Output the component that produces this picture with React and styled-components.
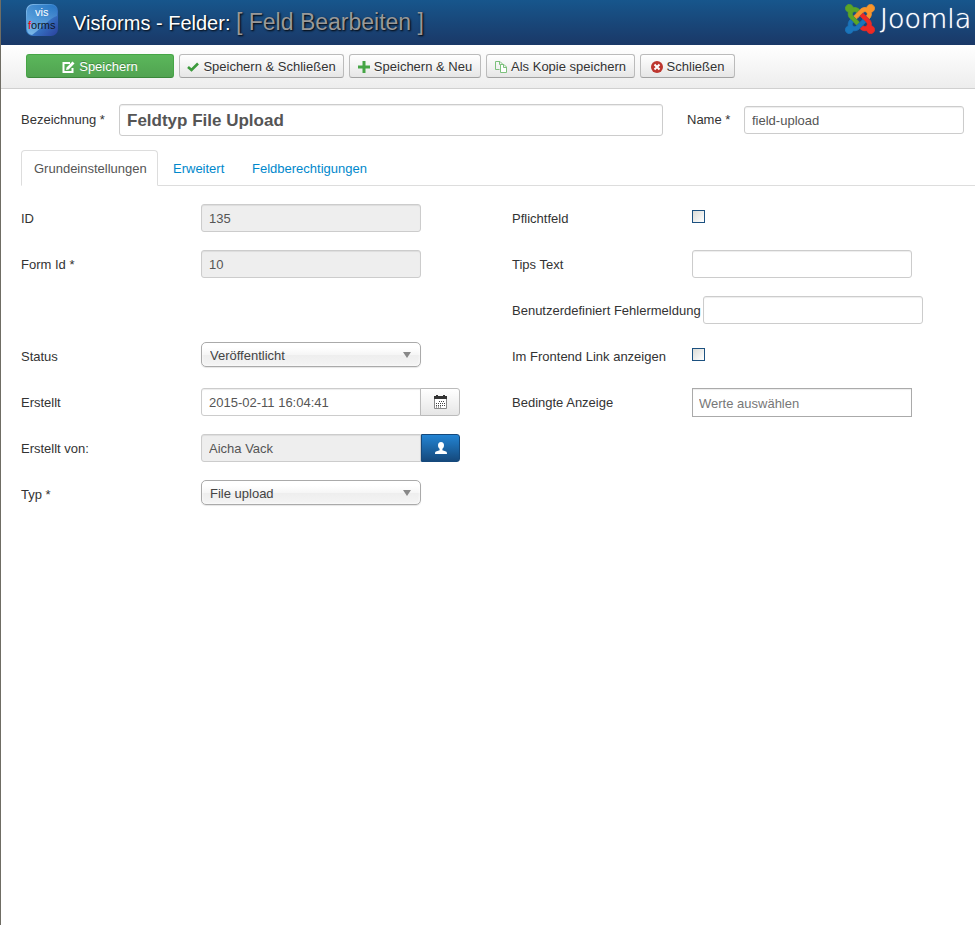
import React, { useState } from 'react';
import styled, { createGlobalStyle, css } from 'styled-components';

const GlobalStyle = createGlobalStyle`
  * {
    box-sizing: border-box;
  }

  body {
    margin: 0;
    background: #fff;
    color: #333;
    font-family: "Liberation Sans", Arial, sans-serif;
    font-size: 13px;
    line-height: 18px;
  }

  button, input, select {
    font-family: inherit;
    font-size: inherit;
    line-height: inherit;
  }
`;

//LAYOUT

const Page = styled.div`
  min-height: 100vh;
  border-left: 1px solid #6f6d64;
  overflow: hidden;
`;

const Header = styled.header`
  display: flex;
  align-items: flex-start;
  height: 45px;
  padding: 4px 0 0 25px;
  overflow: hidden;
  background: linear-gradient(#17568c, #1a3867);
`;

const Title = styled.h1`
  flex: 1;
  margin: 0 0 0 15px;
  color: #fff;
  font-size: 20px;
  font-weight: normal;
  line-height: 36px;
  white-space: nowrap;
  text-shadow: 1px 1px 2px #000;
`;

const Subtitle = styled.small`
  color: #999;
  font-size: 23px;
`;

const Brand = styled.a`
  display: flex;
  flex: none;
  align-items: center;
  gap: 5px;
  width: 130px;
  height: 30px;
  color: #fff;
  font-family: "DejaVu Sans", sans-serif;
  font-size: 27px;
  font-weight: 200;
  text-decoration: none;
  text-shadow: 0 0 1px #fff;
  white-space: nowrap;

  svg {
    flex: none;
  }
`;

const Toolbar = styled.div`
  display: flex;
  flex-wrap: wrap;
  gap: 5px;
  padding: 9px 25px 10px;
  border-bottom: 1px solid #d0d0d0;
  background: linear-gradient(#fff, #ededed);
`;

const ToolButton = styled.button`
  display: inline-flex;
  align-items: center;
  justify-content: center;
  gap: 4px;
  height: 24px;
  min-width: ${(props) => props.$width}px;
  padding: 1px 6px 0;
  border: 1px solid #bbb;
  border-bottom-color: #a2a2a2;
  border-radius: 3px;
  background: linear-gradient(#fff, #e6e6e6);
  color: #333;
  white-space: nowrap;
  text-shadow: 0 1px 1px rgba(255, 255, 255, .75);
  cursor: pointer;

  ${(props) => props.$primary && css`
    border-color: #46a546 #46a546 #3a873a;
    background: linear-gradient(#5bb75b, #51a351);
    color: #fff;
    text-shadow: 0 -1px 0 rgba(0, 0, 0, .25);
  `}
`;

const Content = styled.form`
  padding: 15px 0 0 20px;
`;

const TitleRow = styled.div`
  display: flex;
  align-items: center;
  padding-right: 11px;
`;

const TitleLabel = styled.label`
  flex: none;
  width: ${(props) => props.$width}px;
`;

const Tabs = styled.nav`
  display: flex;
  gap: 2px;
  margin: 14px 0 18px;
  border-bottom: 1px solid #ddd;
`;

const Tab = styled.a`
  min-width: ${(props) => props.$width}px;
  height: 36px;
  margin-bottom: -1px;
  padding: 9px 10px 0 12px;
  border: 1px solid transparent;
  border-radius: 4px 4px 0 0;
  color: #08c;
  text-decoration: none;

  ${(props) => props.$active && css`
    border-color: #ddd #ddd #fff;
    background: #fff;
    color: #555;
  `}
`;

const Columns = styled.div`
  display: grid;
  grid-template-columns: 1fr 1fr;
  column-gap: 28px;
`;

const Row = styled.div`
  display: flex;
  align-items: flex-start;
  height: 28px;
  margin-bottom: 18px;
`;

const Label = styled.label`
  flex: none;
  min-width: 180px;
  padding: 6px 2px 0 0;
`;

//CONTROLS

const TextInput = styled.input`
  width: 220px;
  height: 28px;
  padding: 4px 7px;
  border: 1px solid #ccc;
  border-radius: 3px;
  background: #fff;
  box-shadow: inset 0 1px 1px rgba(0, 0, 0, .075);
  color: #555;

  &:read-only {
    background: #eee;
  }
`;

const AddonInput = styled(TextInput)`
  border-radius: 3px 0 0 3px;
`;

const TitleInput = styled(TextInput)`
  flex: 1;
  min-width: 0;
  height: 32px;
  margin-right: 24px;
  padding-top: 6px;
  font-size: 17px;
  font-weight: bold;
`;

const ChosenInput = styled(TextInput)`
  height: 29px;
  padding: 5px 6px 3px;
  border-color: #aaa;
  border-radius: 0;

  &::placeholder {
    color: #777;
    opacity: 1;
  }
`;

const SelectWrap = styled.span`
  position: relative;
  width: 220px;

  svg {
    position: absolute;
    top: 10px;
    right: 10px;
    pointer-events: none;
  }
`;

const Select = styled.select`
  width: 100%;
  height: 25px;
  padding: 2px 24px 0 8px;
  border: 1px solid #aaa;
  border-radius: 5px;
  background: linear-gradient(#fff 20%, #f6f6f6 50%, #eee 52%, #f4f4f4 100%);
  box-shadow: 0 0 3px #fff inset, 0 1px 1px rgba(0, 0, 0, .1);
  color: #444;
  appearance: none;
`;

const Checkbox = styled.input`
  width: 13px;
  height: 13px;
  margin: 6px 0 0;
  border: 1px solid #1c5180;
  background: linear-gradient(135deg, #dcdcd7, #fff);
  appearance: none;

  &:checked {
    background: #1c5180;
  }
`;

const AddonButton = styled.button`
  display: flex;
  align-items: center;
  justify-content: center;
  width: 40px;
  height: 28px;
  margin-left: -1px;
  padding: 0;
  border: 1px solid #bbb;
  border-radius: 0 3px 3px 0;
  background: linear-gradient(#fff, #e6e6e6);
  color: #333;
  cursor: pointer;

  ${(props) => props.$primary && css`
    width: 39px;
    margin-left: 0;
    border-color: #15497c;
    background: linear-gradient(#2384d3, #15497c);
    color: #fff;
  `}
`;

//ICONS

const VisformsLogo = () => (
  <svg width="32" height="32" viewBox="0 0 32 32" role="img" aria-label="Visforms">
    <defs>
      <linearGradient id="vis" x1="0" y1="0" x2="1" y2="1">
        <stop offset="0" stopColor="#8fc4ee" />
        <stop offset=".45" stopColor="#3a86d0" />
        <stop offset="1" stopColor="#2a3f9c" />
      </linearGradient>
      <linearGradient id="shine" x1="0" y1="0" x2="0" y2="1">
        <stop offset="0" stopColor="#1d70c0" stopOpacity=".6" />
        <stop offset="1" stopColor="#9ad4f8" stopOpacity=".7" />
      </linearGradient>
    </defs>
    <rect width="32" height="32" rx="7" fill="url(#vis)" />
    <path d="M7 1h18a6 6 0 0 1 6 6v5C24 14 18 22 6 31a6 6 0 0 1-5-6V7a6 6 0 0 1 6-6z" fill="url(#shine)" />
    <text x="9" y="12" fontSize="11" fill="#fff">vis</text>
    <text x="2" y="25" fontSize="11" fill="#101828"><tspan fill="#f00">f</tspan>orms</text>
  </svg>
);

const JoomlaMark = () => (
  <svg width="30" height="30" viewBox="-6 26 460 460" strokeWidth="12" aria-hidden="true">
    <path fill="#5ba526" stroke="#5ba526" d="M.6 92.1C.6 58.8 27.4 32 60.4 32c30 0 54.500 21.900 59.200 50.200 32.600-7.600 67.100.6 96.500 30l-44.300 44.300c-20.500-20.500-42.600-16.300-55.400-3.500-14.300 14.300-14.300 37.900 0 52.200l99.500 99.500-44 44.300c-87.700-87.200-49.700-49.700-99.800-99.700-26.800-26.500-35-64.800-24.800-98.900C20.400 144.600.6 120.700.6 92.100z" />
    <path fill="#f9952b" stroke="#f9952b" d="M130.100 208.500l44.300 44.300c10-10 89.700-89.700 99.700-99.800 14.300-14.300 37.600-14.300 51.900 0 12.800 12.800 17 35-3.500 55.400l44 44.300c31.200-31.200 38.500-67.600 28.900-101.200 29.200-4.100 51.900-29.200 51.900-59.500 0-33.200-26.800-60.100-59.800-60.100-30.300 0-55.400 22.500-59.500 51.600-33.800-9.900-71.700-1.500-98.300 25.100-18.300 19.100-71.100 71.500-99.600 99.900z" />
    <path fill="#ee2a24" stroke="#ee2a24" d="M396.400 360.700c8.200-32.700-.9-68.500-26.300-93.900-11.800-12.200 5 4.700-99.500-99.700l-44.300 44.300 99.700 99.700c14.300 14.300 14.300 37.600 0 51.900-12.800 12.800-35 17-55.400-3.500l-44 44.300c27.600 30.200 68 38.800 102.700 28 5.500 27.400 29.700 48.100 58.900 48.100 33 0 59.800-26.800 59.800-60.100 0-30.200-22.500-55-51.600-59.100z" />
    <path fill="#1b75bb" stroke="#1b75bb" d="M312.100 307.600l-44-44.300c-87 86.400-50.400 50.400-99.700 99.800-14.300 14.300-37.600 14.300-51.900 0-13.100-13.400-16.900-35.300 3.200-55.400l-44-44.300c-30.200 30.200-38 65.200-29.500 98.300-26.700 6-46.200 29.900-46.200 58.200C0 453.200 26.800 480 59.800 480c28.600 0 52.500-19.800 58.600-46.700 32.700 8.200 68.500-.6 94.200-26 32.100-32 12.200-12.400 99.500-99.700z" />
  </svg>
);

const EditIcon = () => (
  <svg width="13" height="12" viewBox="0 0 13 12" fill="none" aria-hidden="true">
    <path d="M8 2H1.5v9h9V7" stroke="#fff" strokeWidth="2" />
    <path d="M4 9l.6-2.6L10.5.6l2 2L6.6 8.4z" fill="#fff" />
  </svg>
);

const CheckIcon = () => (
  <svg width="12" height="10" viewBox="0 0 12 10" fill="none" aria-hidden="true">
    <path d="M1 5l3.5 3L11 1.5" stroke="#3c9a3c" strokeWidth="2.6" />
  </svg>
);

const PlusIcon = () => (
  <svg width="12" height="12" viewBox="0 0 12 12" aria-hidden="true">
    <path d="M4.500 0h3v4.500H12v3H7.500V12h-3V7.500H0v-3h4.500z" fill="#46a546" />
  </svg>
);

const CopyIcon = () => (
  <svg width="12" height="12" viewBox="0 0 12 12" fill="none" stroke="#7cc07c" aria-hidden="true">
    <path d="M4.500 8.500h-4v-8H5L7.500 3M4.500.5v3h2" />
    <path d="M5.500 3.500H9L11.500 6v5.500h-6zM8.500 3.500v3h3" fill="#fff" />
  </svg>
);

const CancelIcon = () => (
  <svg width="12" height="12" viewBox="0 0 12 12" fill="none" aria-hidden="true">
    <circle cx="6" cy="6" r="6" fill="#bd362f" />
    <path d="M3.500 3.500l5 5M8.500 3.500l-5 5" stroke="#fff" strokeWidth="2" />
  </svg>
);

const CalendarIcon = () => (
  <svg width="13" height="14" viewBox="0 0 13 14" aria-hidden="true">
    <path d="M.5 4v9.500h12V4" fill="#fff" stroke="#888" />
    <path d="M0 1h2V0h2v1h5V0h2v1h2v3H0z" fill="#333" />
    <path d="M5 6.500h6M2 8.500h9M2 10.500h9M2 12h5" stroke="#444" strokeDasharray="1 1" />
  </svg>
);

const UserIcon = () => (
  <svg width="12" height="12" viewBox="0 0 12 12" fill="currentColor" aria-hidden="true">
    <path d="M6 0c2 0 3 1.300 3 3.200C9 5 8.200 6 7.400 6.700v1.500L11 9.600c.7.300 1 .8 1 2.400H0c0-1.600.3-2.100 1-2.400l3.600-1.400V6.700C3.800 6 3 5 3 3.200 3 1.300 4 0 6 0z" />
  </svg>
);

const Arrow = () => (
  <svg width="8" height="6" viewBox="0 0 8 6" aria-hidden="true">
    <path d="M0 0h8L4 6z" fill="#888" />
  </svg>
);

const BUTTONS = [
  { text: 'Speichern', icon: <EditIcon />, width: 148, primary: true },
  { text: 'Speichern & Schließen', icon: <CheckIcon />, width: 165 },
  { text: 'Speichern & Neu', icon: <PlusIcon />, width: 132 },
  { text: 'Als Kopie speichern', icon: <CopyIcon />, width: 149 },
  { text: 'Schließen', icon: <CancelIcon />, width: 95 },
];

const TABS = [
  { text: 'Grundeinstellungen', width: 137 },
  { text: 'Erweitert', width: 77 },
  { text: 'Feldberechtigungen', width: 139 },
];

const App = () => {
  const [tab, setTab] = useState('Grundeinstellungen');

  const openTab = (e, text) => {
    e.preventDefault();
    setTab(text);
  };

  return (
    <Page>
      <GlobalStyle />
      <Header>
        <VisformsLogo />
        <Title>Visforms - Felder: <Subtitle>[ Feld Bearbeiten ]</Subtitle></Title>
        <Brand href="#"><JoomlaMark />Joomla</Brand>
      </Header>
      <Toolbar>
        {BUTTONS.map((button) => (
          <ToolButton key={button.text} type="button" $width={button.width} $primary={button.primary}>
            {button.icon}{button.text}
          </ToolButton>
        ))}
      </Toolbar>
      <Content onSubmit={(e) => e.preventDefault()}>
        <TitleRow>
          <TitleLabel htmlFor="label" $width={98}>Bezeichnung *</TitleLabel>
          <TitleInput id="label" defaultValue="Feldtyp File Upload" />
          <TitleLabel htmlFor="name" $width={57}>Name *</TitleLabel>
          <TextInput id="name" defaultValue="field-upload" />
        </TitleRow>
        <Tabs>
          {TABS.map((item) => (
            <Tab
              key={item.text}
              href="#"
              $width={item.width}
              $active={tab === item.text}
              onClick={(e) => openTab(e, item.text)}
            >
              {item.text}
            </Tab>
          ))}
        </Tabs>
        <Columns>
          <div>
            <Row>
              <Label htmlFor="id">ID</Label>
              <TextInput id="id" defaultValue="135" readOnly />
            </Row>
            <Row>
              <Label htmlFor="fid">Form Id *</Label>
              <TextInput id="fid" defaultValue="10" readOnly />
            </Row>
            <Row />
            <Row>
              <Label htmlFor="status">Status</Label>
              <SelectWrap>
                <Select id="status">
                  <option>Veröffentlicht</option>
                </Select>
                <Arrow />
              </SelectWrap>
            </Row>
            <Row>
              <Label htmlFor="created">Erstellt</Label>
              <AddonInput id="created" defaultValue="2015-02-11 16:04:41" />
              <AddonButton type="button" aria-label="Kalender"><CalendarIcon /></AddonButton>
            </Row>
            <Row>
              <Label htmlFor="author">Erstellt von:</Label>
              <AddonInput id="author" defaultValue="Aicha Vack" readOnly />
              <AddonButton type="button" aria-label="Benutzer" $primary><UserIcon /></AddonButton>
            </Row>
            <Row>
              <Label htmlFor="type">Typ *</Label>
              <SelectWrap>
                <Select id="type">
                  <option>File upload</option>
                </Select>
                <Arrow />
              </SelectWrap>
            </Row>
          </div>
          <div>
            <Row>
              <Label htmlFor="required">Pflichtfeld</Label>
              <Checkbox id="required" type="checkbox" />
            </Row>
            <Row>
              <Label htmlFor="tips">Tips Text</Label>
              <TextInput id="tips" />
            </Row>
            <Row>
              <Label htmlFor="error">Benutzerdefiniert Fehlermeldung</Label>
              <TextInput id="error" />
            </Row>
            <Row>
              <Label htmlFor="link">Im Frontend Link anzeigen</Label>
              <Checkbox id="link" type="checkbox" />
            </Row>
            <Row>
              <Label htmlFor="condition">Bedingte Anzeige</Label>
              <ChosenInput id="condition" placeholder="Werte auswählen" />
            </Row>
          </div>
        </Columns>
      </Content>
    </Page>
  );
};

export default App;
